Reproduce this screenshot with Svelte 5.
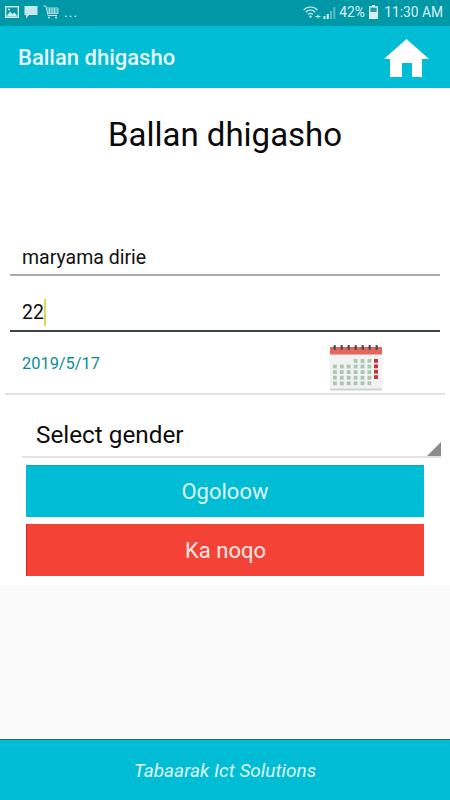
<script>
  const greenRows = [
    [0,0,0,1,1,1],[1,1,1,1,1,1],[1,1,1,1,1,1],[1,1,1,1,1,1],[1,1,1,1,1,1]
  ];
  const rings = [5, 12, 19, 26, 33, 40, 47];
</script>

<div class="screen">
  <header class="status">
    <div class="status-left">
      <svg width="14" height="12" viewBox="0 0 14 12"><rect x="0.7" y="0.7" width="12.6" height="10.6" fill="none" stroke="#d6f0f2" stroke-width="1.4"/><path d="M1.5 10.5 L5 5.5 L7.5 8 L9.5 6.5 L12.5 10.5Z" fill="#d6f0f2"/><circle cx="4" cy="3.5" r="1" fill="#d6f0f2"/></svg>
      <svg width="14" height="14" viewBox="0 0 14 14"><path d="M0.5 1 H13.5 V10 H5 L2 13.5 V10 H0.5Z" fill="#c5e8ea"/></svg>
      <svg width="16" height="14" viewBox="0 0 16 14"><path d="M0.5 0.7 L3 1.3 L5 10.5 H14" fill="none" stroke="#c5e8ea"/><path d="M4 3 H15 V8.5 H5M6.5 3V8.5M9 3V8.5M11.5 3V8.5M4.5 5H15M4.5 7H15" fill="none" stroke="#c5e8ea" stroke-width="0.8"/><circle cx="6" cy="12.5" r="1" fill="#c5e8ea"/><circle cx="13" cy="12.5" r="1" fill="#c5e8ea"/></svg>
      <span class="dots">...</span>
    </div>
    <div class="status-right">
      <svg class="wifi" width="18" height="13" viewBox="0 0 18 13"><path d="M0.6 4 C4.5 0 10.5 0 14.4 4M2.8 6.2 C5.6 3.5 9.4 3.5 12.2 6.2M5 8.4 C6.6 7 8.4 7 10 8.4" fill="none" stroke="#d6f0f2" stroke-width="1.2"/><circle cx="7.5" cy="10.6" r="1.2" fill="#d6f0f2"/><path d="M12.5 10.5H17.5M15 8.5V12.5" stroke="#d6f0f2" stroke-width="1"/></svg>
      <svg class="signal" width="13" height="13" viewBox="0 0 13 13"><path d="M0.5 10h2v3h-2zM3.8 8h2v5h-2z" fill="#d6f0f2"/><path d="M7 5h2v8H7zM10.3 1h2v12h-2z" fill="#5fb9c0"/></svg>
      <span class="pct">42%</span>
      <svg class="battery" width="9" height="14" viewBox="0 0 9 14"><path d="M3 0h3v1.3h3V14H0V1.3h3Z" fill="#d6f0f2"/><rect x="1.3" y="2.6" width="6.4" height="4.4" fill="#2a9ba3"/></svg>
      <span class="time">11:30 AM</span>
    </div>
  </header>

  <nav class="appbar">
    <span class="appbar-title">Ballan dhigasho</span>
    <svg class="home" width="45" height="38" viewBox="0 0 45 38"><path d="M22.5 0 L45 20 H38 V38 H28 V24 H18 V38 H6 V20 H0Z" fill="#fff"/></svg>
  </nav>

  <main class="form">
    <h1>Ballan dhigasho</h1>

    <div class="field name">maryama dirie</div>
    <div class="field age">22<span class="caret"></span></div>

    <div class="date-row">
      <span class="date">2019/5/17</span>
      <svg class="calendar" width="52" height="46" viewBox="0 0 52 46">
        <rect x="0" y="4" width="52" height="41" rx="1" fill="#f2f2f4"/>
        <rect x="0" y="43.5" width="52" height="2" fill="#cfd0d2"/>
        <rect x="0" y="2" width="52" height="7.5" fill="#e4655a"/>
        {#each rings as x}
          <rect x={x - 1.5} y="0" width="2.4" height="5" rx="1" fill="#4d4f55"/>
        {/each}
        {#each greenRows as row, r}
          {#each row as on, c}
            {#if on}
              <rect x={3 + c * 6.9} y={14 + r * 5.6} width="3.8" height="3.8" fill="#a9c9ab" />
            {/if}
          {/each}
        {/each}
        {#each [0, 1, 2, 3] as r}
          <rect x="44" y={14 + r * 5.4} width="4" height="3.8" fill="#c8343c"/>
        {/each}
      </svg>
    </div>

    <div class="select">
      <span>Select gender</span>
      <svg class="arrow" width="14" height="14" viewBox="0 0 14 14"><path d="M14 0V14H0Z" fill="#8c8c8c"/></svg>
    </div>

    <div class="buttons">
      <button class="btn ok">Ogoloow</button>
      <button class="btn cancel">Ka noqo</button>
    </div>
  </main>

  <div class="spacer"></div>

  <footer class="footer">Tabaarak Ict Solutions</footer>
</div>

<style>
  :global(body) { margin: 0; }
  .screen {
    width: 450px;
    height: 800px;
    display: flex;
    flex-direction: column;
    font-family: Roboto, "Liberation Sans", sans-serif;
    background: #fff;
    overflow: hidden;
  }
  .status {
    height: 26px;
    flex: none;
    background: #0098a6;
    display: flex;
    justify-content: space-between;
    align-items: center;
    padding: 0 7px 2px 5px;
    box-sizing: border-box;
    color: #d6f0f2;
    font-size: 15.5px;
  }
  .status-left, .status-right { display: flex; align-items: center; }
  .status-left { gap: 5px; }
  .dots { font-size: 14px; letter-spacing: 1px; }
  .pct, .time { display: inline-block; transform: scaleX(0.89); transform-origin: right center; }
  .signal { margin-left: 2px; }
  .battery { margin-left: 4px; }
  .time { margin-left: -1px; }
  .appbar {
    height: 62px;
    flex: none;
    background: #00bcd4;
    display: flex;
    align-items: center;
    justify-content: space-between;
    padding: 0 21px 0 18px;
    box-sizing: border-box;
    color: #e6f8fb;
  }
  .appbar-title { font-size: 22px; font-weight: 500; }
  .home { margin-top: 1px; }
  .form {
    height: 497px;
    flex: none;
    display: flex;
    flex-direction: column;
    box-sizing: border-box;
  }
  h1 {
    margin: 26px 0 0;
    height: 42px;
    line-height: 42px;
    text-align: center;
    font-size: 33px;
    font-weight: 400;
    color: #0a0a0a;
  }
  .field {
    margin: 0 10px;
    font-size: 19.5px;
    color: #111;
    padding: 0 12px;
    box-sizing: border-box;
    display: flex;
    align-items: center;
  }
  .name {
    margin-top: 79px;
    height: 41px;
    border-bottom: 2px solid #ababab;
    padding-top: 6px;
  }
  .age {
    height: 56px;
    border-bottom: 2px solid #3d4650;
    padding-top: 18px;
  }
  .caret {
    width: 2px;
    height: 27px;
    background: #d4dc5a;
  }
  .date-row {
    margin: 0 5px;
    height: 63px;
    border-bottom: 2px solid #e2e2e2;
    display: flex;
    align-items: flex-start;
    justify-content: space-between;
    box-sizing: border-box;
    padding: 13px 63px 0 17px;
  }
  .date { font-size: 16.4px; line-height: 39px; margin-top: -1px; color: #0a8c98; }
  .select {
    position: relative;
    margin: 0 9px 0 22px;
    height: 63px;
    border-bottom: 2px solid #e4e4e4;
    box-sizing: border-box;
    padding: 24px 0 0 14px;
    font-size: 24.3px;
    line-height: 32px;
    color: #0c0c0c;
  }
  .arrow { position: absolute; right: 0; bottom: 0; }
  .buttons {
    margin: 7px 26px 0;
    display: flex;
    flex-direction: column;
    gap: 7px;
  }
  .btn {
    height: 52px;
    border: none;
    padding: 0;
    font: inherit;
    font-size: 22px;
    color: #dff6f9;
  }
  .ok { background: #00bcd4; border-top: 1px solid #0aa5b9; }
  .cancel { background: #f44336; border-left: 1px solid #cf2a20; color: #fde8e6; }
  .spacer { flex: 1; background: #fafafa; }
  .footer {
    height: 61px;
    flex: none;
    background: #00bcd4;
    border-top: 1px solid #0f6f7d;
    box-sizing: border-box;
    display: flex;
    align-items: center;
    justify-content: center;
    font-size: 19px;
    font-style: italic;
    color: #dff6f9;
  }
</style>
